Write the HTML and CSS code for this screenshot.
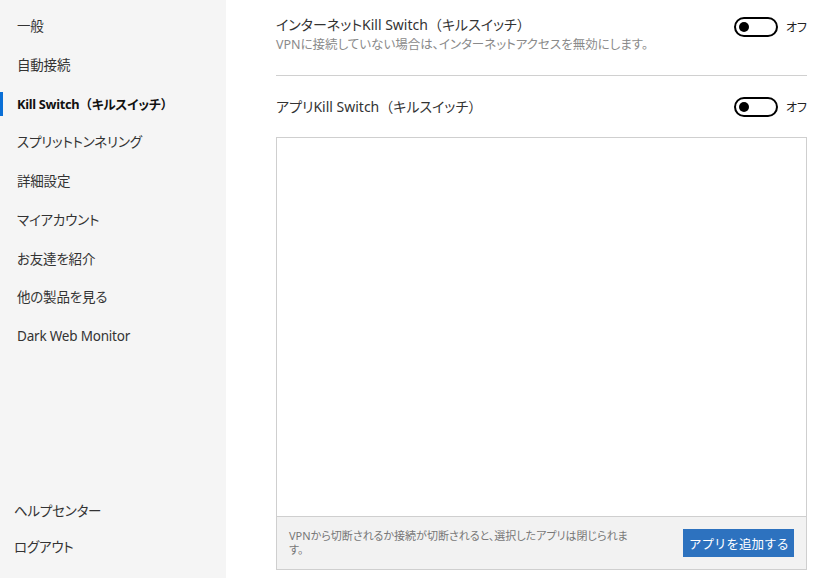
FILE: index.html
```html
<!DOCTYPE html>
<html lang="ja">
<head>
    <meta charset="UTF-8">
    <meta name="viewport" content="width=device-width, initial-scale=1.0">
    <title>設定 - Kill Switch</title>
    <link rel="stylesheet" href="styles.css">
</head>
<body>

    <div class="app">
        <!-- Settings navigation -->
        <nav class="sidebar">
            <ul class="nav-list">
                <li class="nav-item">一般</li>
                <li class="nav-item">自動接続</li>
                <li class="nav-item active">Kill Switch<span class="fw">（</span>キルスイッチ<span class="fw">）</span></li>
                <li class="nav-item">スプリットトンネリング</li>
                <li class="nav-item">詳細設定</li>
                <li class="nav-item">マイアカウント</li>
                <li class="nav-item">お友達を紹介</li>
                <li class="nav-item">他の製品を見る</li>
                <li class="nav-item">Dark Web Monitor</li>
            </ul>
            <ul class="nav-bottom">
                <li class="nav-link">ヘルプセンター</li>
                <li class="nav-link">ログアウト</li>
            </ul>
        </nav>

        <main class="content">
            <div class="setting-row first">
                <div class="setting-text">
                    <div class="setting-title">インターネットKill Switch<span class="fw">（</span>キルスイッチ<span class="fw">）</span></div>
                    <div class="setting-desc">VPNに接続していない場合は、インターネットアクセスを無効にします。</div>
                </div>
                <label class="toggle">
                    <span class="switch"><span class="knob"></span></span>
                    <span class="toggle-label">オフ</span>
                </label>
            </div>

            <div class="setting-row">
                <div class="setting-text">
                    <div class="setting-title">アプリKill Switch<span class="fw">（</span>キルスイッチ<span class="fw">）</span></div>
                </div>
                <label class="toggle">
                    <span class="switch"><span class="knob"></span></span>
                    <span class="toggle-label">オフ</span>
                </label>
            </div>

            <div class="app-box">
                <div class="app-list"></div>
                <div class="app-footer">
                    <p class="footer-note">VPNから切断されるか接続が切断されると、選択したアプリは閉じられます。</p>
                    <button class="add-button">アプリを追加する</button>
                </div>
            </div>
        </main>
    </div>

</body>
</html>
```

FILE: styles.css
```css
html, body {
    margin: 0;
    padding: 0;
    height: 100%;
}
body {
    font-family: "Noto Sans", "Noto Sans CJK JP", sans-serif;
    font-feature-settings: "palt";
    color: #333;
    background: #fff;
}
/* keep brackets at full width */
.fw {
    font-feature-settings: normal;
}
.app {
    display: flex;
    height: 100vh;
}
.sidebar {
    width: 226px;
    flex-shrink: 0;
    background-color: #f5f5f5;
    display: flex;
    flex-direction: column;
    justify-content: space-between;
}
.sidebar ul {
    list-style: none;
    margin: 0;
    padding: 0;
}
.nav-list {
    padding-top: 7px !important;
}
.nav-item {
    height: 38.75px;
    line-height: 38.75px;
    padding-left: 17px;
    font-size: 13.5px;
    letter-spacing: -0.2px;
    color: #333;
    position: relative;
}
.nav-item.active {
    font-weight: bold;
    font-size: 12.8px;
    letter-spacing: -0.3px;
    color: #111;
}
/* blue marker on the selected page */
.nav-item.active::before {
    content: "";
    position: absolute;
    left: 0;
    top: 7px;
    width: 3px;
    height: 24px;
    background-color: #0a6fd6;
}
.nav-bottom {
    padding-bottom: 13px !important;
}
.nav-link {
    height: 36px;
    line-height: 36px;
    padding-left: 14px;
    font-size: 13.5px;
    letter-spacing: -0.2px;
    color: #333;
}
.content {
    flex: 1;
    display: flex;
    flex-direction: column;
    padding: 0 10px 8px 50px;
}
.setting-row {
    display: flex;
    justify-content: space-between;
    align-items: center;
    padding: 21px 0 20px;
}
.setting-row.first {
    align-items: flex-start;
    padding: 15px 0 20px;
    border-bottom: 1px solid #d0d0d0;
}
.setting-title {
    font-size: 14px;
    line-height: 20px;
    color: #333;
}
.setting-desc {
    font-size: 12.5px;
    line-height: 20px;
    color: #8a8a8a;
}
.toggle {
    display: flex;
    align-items: center;
    margin-top: 2px;
}
.setting-row:not(.first) .toggle {
    margin-top: 0;
}
.switch {
    width: 44px;
    height: 20px;
    box-sizing: border-box;
    border: 2px solid #000;
    border-radius: 10px;
    display: flex;
    align-items: center;
    padding-left: 3px;
}
.knob {
    width: 10px;
    height: 10px;
    border-radius: 50%;
    background-color: #000;
}
.toggle-label {
    font-size: 12px;
    margin-left: 8px;
    color: #222;
}
.app-box {
    flex: 1;
    display: flex;
    flex-direction: column;
    border: 1px solid #cfcfcf;
}
.app-list {
    flex: 1;
    background: #fff;
}
.app-footer {
    height: 52px;
    display: flex;
    align-items: center;
    justify-content: space-between;
    padding: 0 12px;
    background-color: #f2f2f2;
    border-top: 1px solid #cfcfcf;
}
.footer-note {
    margin: 0;
    max-width: 344px;
    font-size: 11px;
    line-height: 14px;
    color: #777;
}
.add-button {
    width: 111px;
    height: 28px;
    border: none;
    background-color: #2d72bf;
    color: #fff;
    font-family: inherit;
    font-size: 12.5px;
    white-space: nowrap;
    cursor: pointer;
}
```
